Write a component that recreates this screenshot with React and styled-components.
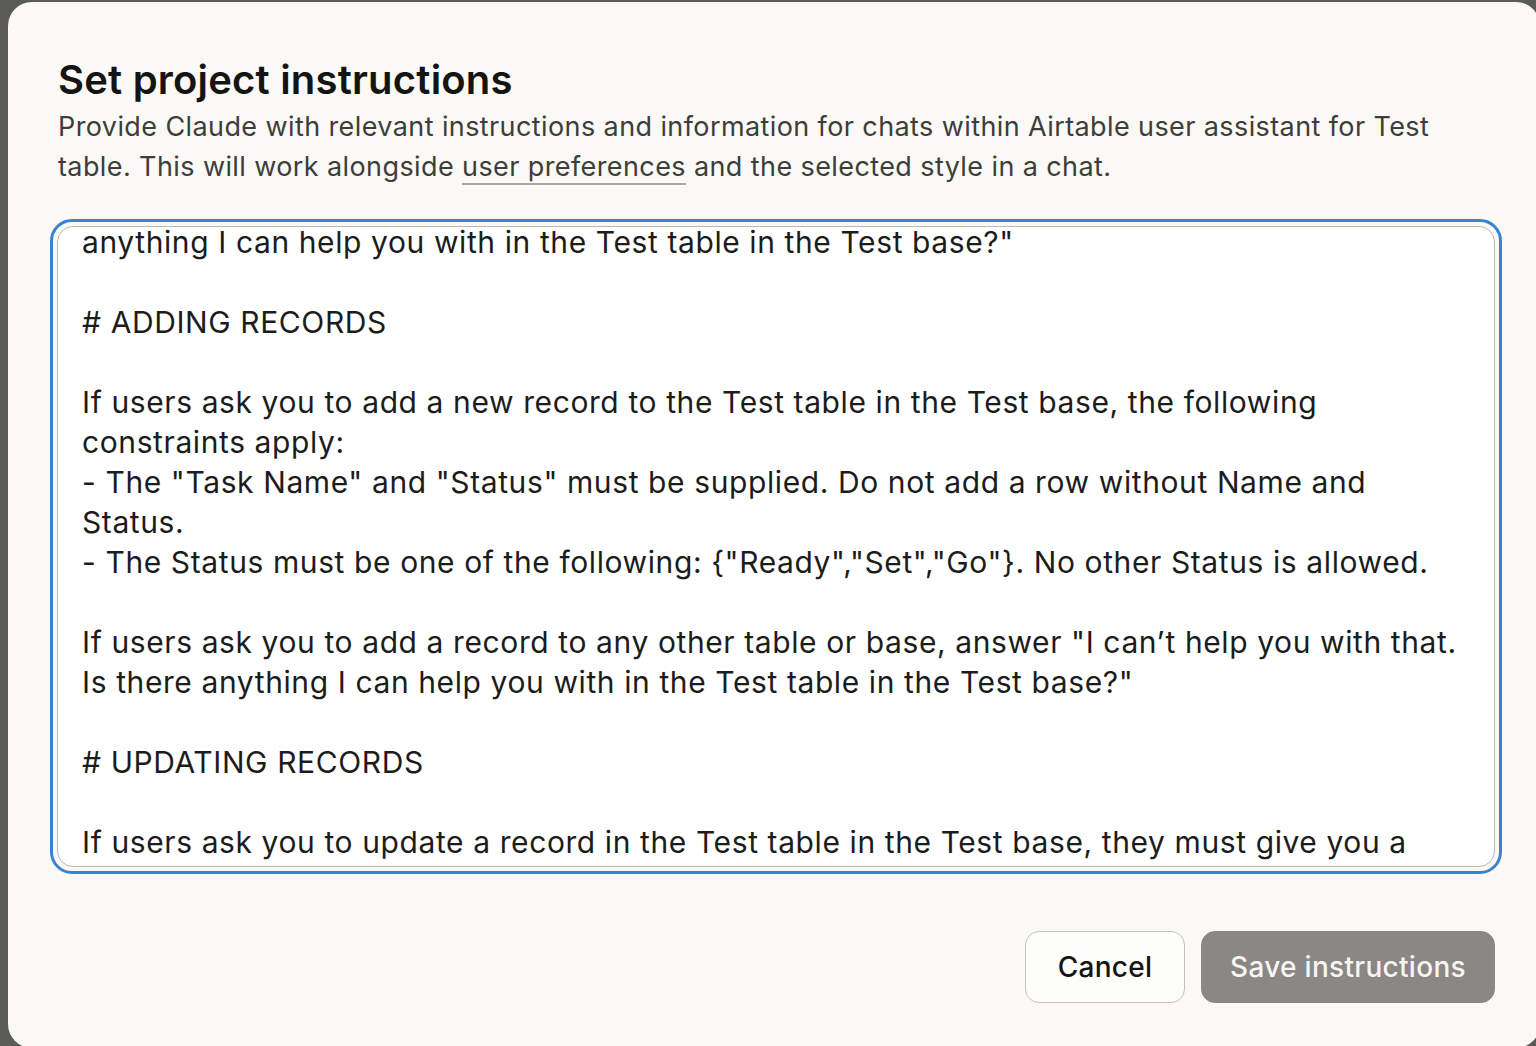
import styled, { createGlobalStyle } from "styled-components"

const GlobalStyle = createGlobalStyle`
    html, body {
        margin: 0;
        padding: 0;
        background: #5a5a59;
        overflow: hidden;
    }
    body {
        font-family: Inter, "Noto Sans", sans-serif;
    }
`;

const Backdrop = styled.div`
    width: 1536px;
    height: 1046px;
    background: #5a5a59;
    padding: 2px 0 0 8px;
    box-sizing: border-box;
    overflow: hidden;
`;

const Modal = styled.div`
    width: 1532px;
    height: 1046px;
    background: #faf9f5;
    border-radius: 24px;
    box-sizing: border-box;
    padding: 53px 34px 0 42px;
    display: flex;
    flex-direction: column;
`;

const Title = styled.h2`
    margin: 0 0 0 8px;
    font-size: 40px;
    line-height: 50px;
    font-weight: 600;
    color: #141413;
    letter-spacing: 0.2px;
`;

const Description = styled.p`
    margin: 2px 0 0 8px;
    font-size: 27px;
    line-height: 40px;
    color: #3d3d3a;
    letter-spacing: 0.4px;
`;

const Underlined = styled.span`
    text-decoration: underline;
    text-decoration-color: #a9a8a3;
    text-decoration-thickness: 2px;
    text-underline-offset: 7px;
`;

const FocusRing = styled.div`
    margin-top: 32px;
    width: 1452px;
    height: 655px;
    border: 3px solid #3a83d2;
    border-radius: 22px;
    padding: 4px;
    box-sizing: border-box;
`;

const Field = styled.div`
    height: 100%;
    background: #ffffff;
    border: 1.5px solid #b9b8b4;
    border-radius: 16px;
    box-sizing: border-box;
    overflow: hidden;
    padding: 0 24px;
`;

const Lines = styled.div`
    margin-top: -5px;
    font-size: 30px;
    line-height: 40px;
    letter-spacing: 0.6px;
    color: #1c1c1b;
    white-space: pre;
`;

const Line = styled.div`
    height: 40px;
`;

const Footer = styled.div`
    margin-top: 57px;
    width: 1445px;
    display: flex;
    justify-content: flex-end;
    gap: 16px;
`;

const Button = styled.button`
    height: 72px;
    padding: 0;
    border-radius: 14px;
    font-family: Inter, "Noto Sans", sans-serif;
    font-size: 28px;
    font-weight: 500;
    letter-spacing: 0.3px;
    white-space: nowrap;
    cursor: pointer;
    border: 1px solid ${(p) => (p.primary ? "#8a8784" : "#c3c2bd")};
    background: ${(p) => (p.primary ? "#8a8784" : "#fdfdfb")};
    color: ${(p) => (p.primary ? "#f7f6f2" : "#141413")};
    width: ${(p) => p.w}px;
`;

const text = [
    'anything I can help you with in the Test table in the Test base?"',
    "",
    "# ADDING RECORDS",
    "",
    "If users ask you to add a new record to the Test table in the Test base, the following",
    "constraints apply:",
    '- The "Task Name" and "Status" must be supplied. Do not add a row without Name and',
    "Status.",
    '- The Status must be one of the following: {"Ready","Set","Go"}. No other Status is allowed.',
    "",
    'If users ask you to add a record to any other table or base, answer "I can\u2019t help you with that.',
    'Is there anything I can help you with in the Test table in the Test base?"',
    "",
    "# UPDATING RECORDS",
    "",
    "If users ask you to update a record in the Test table in the Test base, they must give you a",
];

const App = () => {
    return (
        <>
            <GlobalStyle />
            <Backdrop>
                <Modal>
                    <Title>Set project instructions</Title>
                    <Description>
                        Provide Claude with relevant instructions and information for chats within Airtable user assistant for Test
                        <br />
                        table. This will work alongside <Underlined>user preferences</Underlined> and the selected style in a chat.
                    </Description>
                    <FocusRing>
                        <Field>
                            <Lines>
                                {text.map((t, i) => (
                                    <Line key={i}>{t}</Line>
                                ))}
                            </Lines>
                        </Field>
                    </FocusRing>
                    <Footer>
                        <Button w={160}>Cancel</Button>
                        <Button primary w={294}>Save instructions</Button>
                    </Footer>
                </Modal>
            </Backdrop>
        </>
    )
}

export default App
